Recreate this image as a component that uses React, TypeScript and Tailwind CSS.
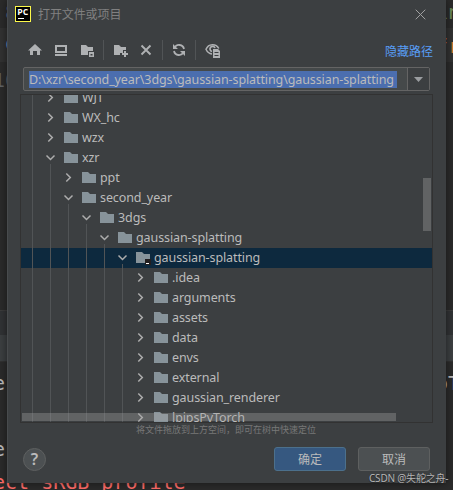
import React from "react";

type Node = { name: string; level: number; open?: boolean; selected?: boolean };

const nodes: Node[] = [
  { name: "WJT", level: 0 },
  { name: "WX_hc", level: 0 },
  { name: "wzx", level: 0 },
  { name: "xzr", level: 0, open: true },
  { name: "ppt", level: 1 },
  { name: "second_year", level: 1, open: true },
  { name: "3dgs", level: 2, open: true },
  { name: "gaussian-splatting", level: 3, open: true },
  { name: "gaussian-splatting", level: 4, open: true, selected: true },
  { name: ".idea", level: 5 },
  { name: "arguments", level: 5 },
  { name: "assets", level: 5 },
  { name: "data", level: 5 },
  { name: "envs", level: 5 },
  { name: "external", level: 5 },
  { name: "gaussian_renderer", level: 5 },
  { name: "lpipsPyTorch", level: 5 },
];

function Row({ node }: { node: Node }) {
  return (
    <div className={`flex h-5 shrink-0 pl-[11px] ${node.selected ? "bg-[#0d293e]" : ""}`}>
      {Array.from({ length: node.level + 1 }, (_, i) => (
        <span key={i} className={`h-5 shrink-0 border-l border-[#515456] ${i === node.level ? "w-[11px]" : "w-[18px]"}`} />
      ))}
      <svg className="h-5 w-[15px] shrink-0" viewBox="0 0 15 20" fill="none">
        {node.open ? (
          <>
            <path d="M3.500 7.500 7.500 11.500 11.500 7.500" stroke="#adadad" strokeWidth="1.500" />
            <path d="M7.500 16V20" stroke="#515456" />
          </>
        ) : (
          <path d="M5.300 5.500 9.300 9.500 5.300 13.500" stroke="#adadad" strokeWidth="1.500" />
        )}
      </svg>
      <svg className="ml-[6px] h-5 w-[16px] shrink-0" viewBox="0 0 16 20">
        <path d="M0 4H6L8 6H14V15H0Z" fill="#87939a" />
        {node.selected && (
          <>
            <path d="M9 11H15V17H9Z" fill="#231f20" />
            <path d="M10 15.500H13" stroke="#fff" />
          </>
        )}
      </svg>
      <span className="ml-[2px] text-[12.5px] leading-[20px] tracking-[-0.1px] whitespace-nowrap text-[#bbbbbb]">{node.name}</span>
    </div>
  );
}

function Toolbar() {
  return (
    <svg className="h-[30px] w-[220px]" viewBox="20 35 220 30" fill="#afb1b3">
      <path d="M35 44 42 50.500H40V55H37V51H33V55H30V50.500H28Z" />
      <path d="M55 45H67V53H55ZM57 47V51H65V47ZM55 54H67V56H55Z" fillRule="evenodd" />
      <path d="M81 45H86L88 47H93V51H88V55H81Z" />
      <path d="M89 52H94V57H89ZM90.500 54V55.500H92.500V54Z" fillRule="evenodd" />
      <path d="M103.500 40V60" stroke="#515456" />
      <path d="M114 45H119L121 47H126V50H123V53H120V55H114Z" />
      <path d="M125 51V57M122 54H128" stroke="#afb1b3" strokeWidth="2" />
      <path d="M141.500 45.500 150.500 54.500M150.500 45.500 141.500 54.500" stroke="#afb1b3" strokeWidth="1.900" />
      <path d="M162.500 40V60M195.500 40V60" stroke="#515456" />
      <path d="M174.500 48A5 5 0 0 1 184 49M183.500 52A5 5 0 0 1 174 51" fill="none" stroke="#afb1b3" strokeWidth="1.800" />
      <path d="M173 44V49H178ZM185 56V51H180Z" />
      <path d="M218.800 48.500C216 43.300 208.500 43.300 206 49.300C207.300 52.300 209.300 53.700 212 54" fill="none" stroke="#afb1b3" strokeWidth="1.500" />
      <path d="M215 48A2.600 2.600 0 1 0 212 51.500" fill="none" stroke="#afb1b3" strokeWidth="1.700" />
      <path d="M213 49H218L220 51V58H213ZM214.500 52V53H218.500V52ZM214.500 55V56H218.500V55Z" fillRule="evenodd" />
    </svg>
  );
}

export default function App() {
  return (
    <div className="relative h-[490px] w-[453px] overflow-hidden bg-[#2b2b2b] font-['Noto_Sans','Noto_Sans_CJK_SC',sans-serif]">
      <div className="flex h-full flex-col">
        <div className="h-[28px] bg-[#2b2b2b]" />
        <div className="h-[34px] bg-[#323232]" />
        <div className="h-[248px] bg-[#2b2b2b]" />
        <div className="h-[25px] border-t border-[#3c3c3c] bg-[#313335]" />
        <div className="h-[27px] border-b border-[#323232] bg-[#3c3f41]" />
      </div>
      <div className="font-['DejaVu_Sans_Mono',monospace] text-[20px] leading-[20px] whitespace-pre">
        <span className="absolute top-[2px] left-[5px] text-[#4b6581]">8</span>
        <span className="absolute top-[33px] left-[5px] text-[#6897bb]">o</span>
        <span className="absolute top-[70px] left-[-7px] text-[#606366]">10</span>
        <span className="absolute top-[373px] left-[-7px] text-[#bbbbbb]">e</span>
        <span className="absolute top-[439px] left-[-7px] text-[#bbbbbb]">er</span>
        <span className="absolute top-[472px] left-[-7px] text-[#ff6b68]">ect sRGB profile</span>
        <span className="absolute top-[2px] left-[436px] text-[#6a8759]">in</span>
        <span className="absolute top-[36px] left-[436px] text-[#cc7832]">fr</span>
        <span className="absolute top-[373px] left-[436px] text-[#bbbbbb]">oT</span>
      </div>

      <div className="absolute top-0 left-[7px] flex h-[483px] w-[439px] flex-col border-l border-[#484b4d] bg-[#3c3f41] shadow-[0_0_8px_rgba(0,0,0,0.5)]">
        <div className="flex h-[28px] shrink-0 items-center pl-[7px]">
          <svg className="h-4 w-4" viewBox="0 0 16 16">
            <path d="M0 0H16V16H0Z" fill="#fcf84a" />
            <path d="M1 1H15V15H1Z" fill="#000" />
            <text x="2.300" y="9.200" fill="#fff" fontSize="8.500" fontWeight="700" fontFamily="Open Sans" textLength="11" lengthAdjust="spacingAndGlyphs">PC</text>
            <path d="M3 12.500H9" stroke="#fff" />
          </svg>
          <span className="ml-[7px] pt-[2px] text-[12px] leading-4 tracking-[-0.1px] text-[#808080]">打开文件或项目</span>
          <svg className="ml-auto mr-[20px] h-[11px] w-[11px]" viewBox="0 0 11 11">
            <path d="M.7.7 10.300 10.300M10.300.7.7 10.300" stroke="#a0a0a0" />
          </svg>
        </div>
        <div className="mt-[7px] flex h-[30px] shrink-0 items-center justify-between pl-[12px] pr-[13px]">
          <Toolbar />
          <span className="pt-[3px] text-[12px] leading-4 text-[#589df6]">隐藏路径</span>
        </div>
        <div className="mt-[2px] ml-[15px] flex h-6 w-[407px] shrink-0 rounded-[2px] border border-[#646464] bg-[#45494a]">
          <div className="flex flex-1 items-center pl-[5px]">
            <span className="h-[17px] w-[368px] bg-[#4b6eaf] text-[12.5px] leading-[17px] tracking-[-0.1px] whitespace-nowrap text-[#bbbbbb]">D:\xzr\second_year\3dgs\gaussian-splatting\gaussian-splatting</span>
          </div>
          <div className="flex w-[22px] items-center justify-center border-l border-[#646464] bg-[#3c3f41]">
            <svg className="h-[5px] w-[9px]" viewBox="0 0 9 5"><path d="M0 0H9L4.500 5Z" fill="#9a9da0" /></svg>
          </div>
        </div>
        <div className="relative mt-[3px] ml-[12px] h-[329px] w-[413px] shrink-0 overflow-hidden border border-[#323232]">
          <div className="-mt-[7px] flex flex-col">
            {nodes.map((n, i) => <Row key={i} node={n} />)}
          </div>
          <div className="absolute top-[83px] right-[1px] h-[53px] w-[8px] bg-[#a6a6a6]/35" />
          <div className="absolute bottom-[1px] left-[1px] h-[8px] w-[374px] bg-[#a6a6a6]/35" />
        </div>
        <div className="h-[16px] shrink-0 pl-[128px] text-[9px] leading-[14px] text-[#787878]">将文件拖放到上方空间，即可在树中快速定位</div>
        <div className="mt-[8px] flex h-6 shrink-0 items-center pl-[15px]">
          <div className="flex h-[23px] w-[23px] items-center justify-center rounded-full border border-[#5e6060] bg-[#4c5052] text-[16px] leading-none font-semibold text-[#bbbbbb]">?</div>
          <div className="ml-[228px] flex h-6 w-[72px] items-center justify-center rounded-[3px] border border-[#4c708c] bg-[#365880] pt-[2px] text-[12px] text-[#bbbbbb]">确定</div>
          <div className="ml-[12px] flex h-6 w-[72px] items-center justify-center rounded-[3px] border border-[#5e6060] bg-[#4c5052] pt-[2px] text-[12px] text-[#bbbbbb]">取消</div>
        </div>
      </div>
      <span className="absolute top-[471px] left-[369px] text-[10px] leading-[14px] tracking-[-0.2px] whitespace-nowrap text-[#b4b4b4] [text-shadow:0_1px_1px_#222]">CSDN @失舵之舟-</span>
    </div>
  );
}
